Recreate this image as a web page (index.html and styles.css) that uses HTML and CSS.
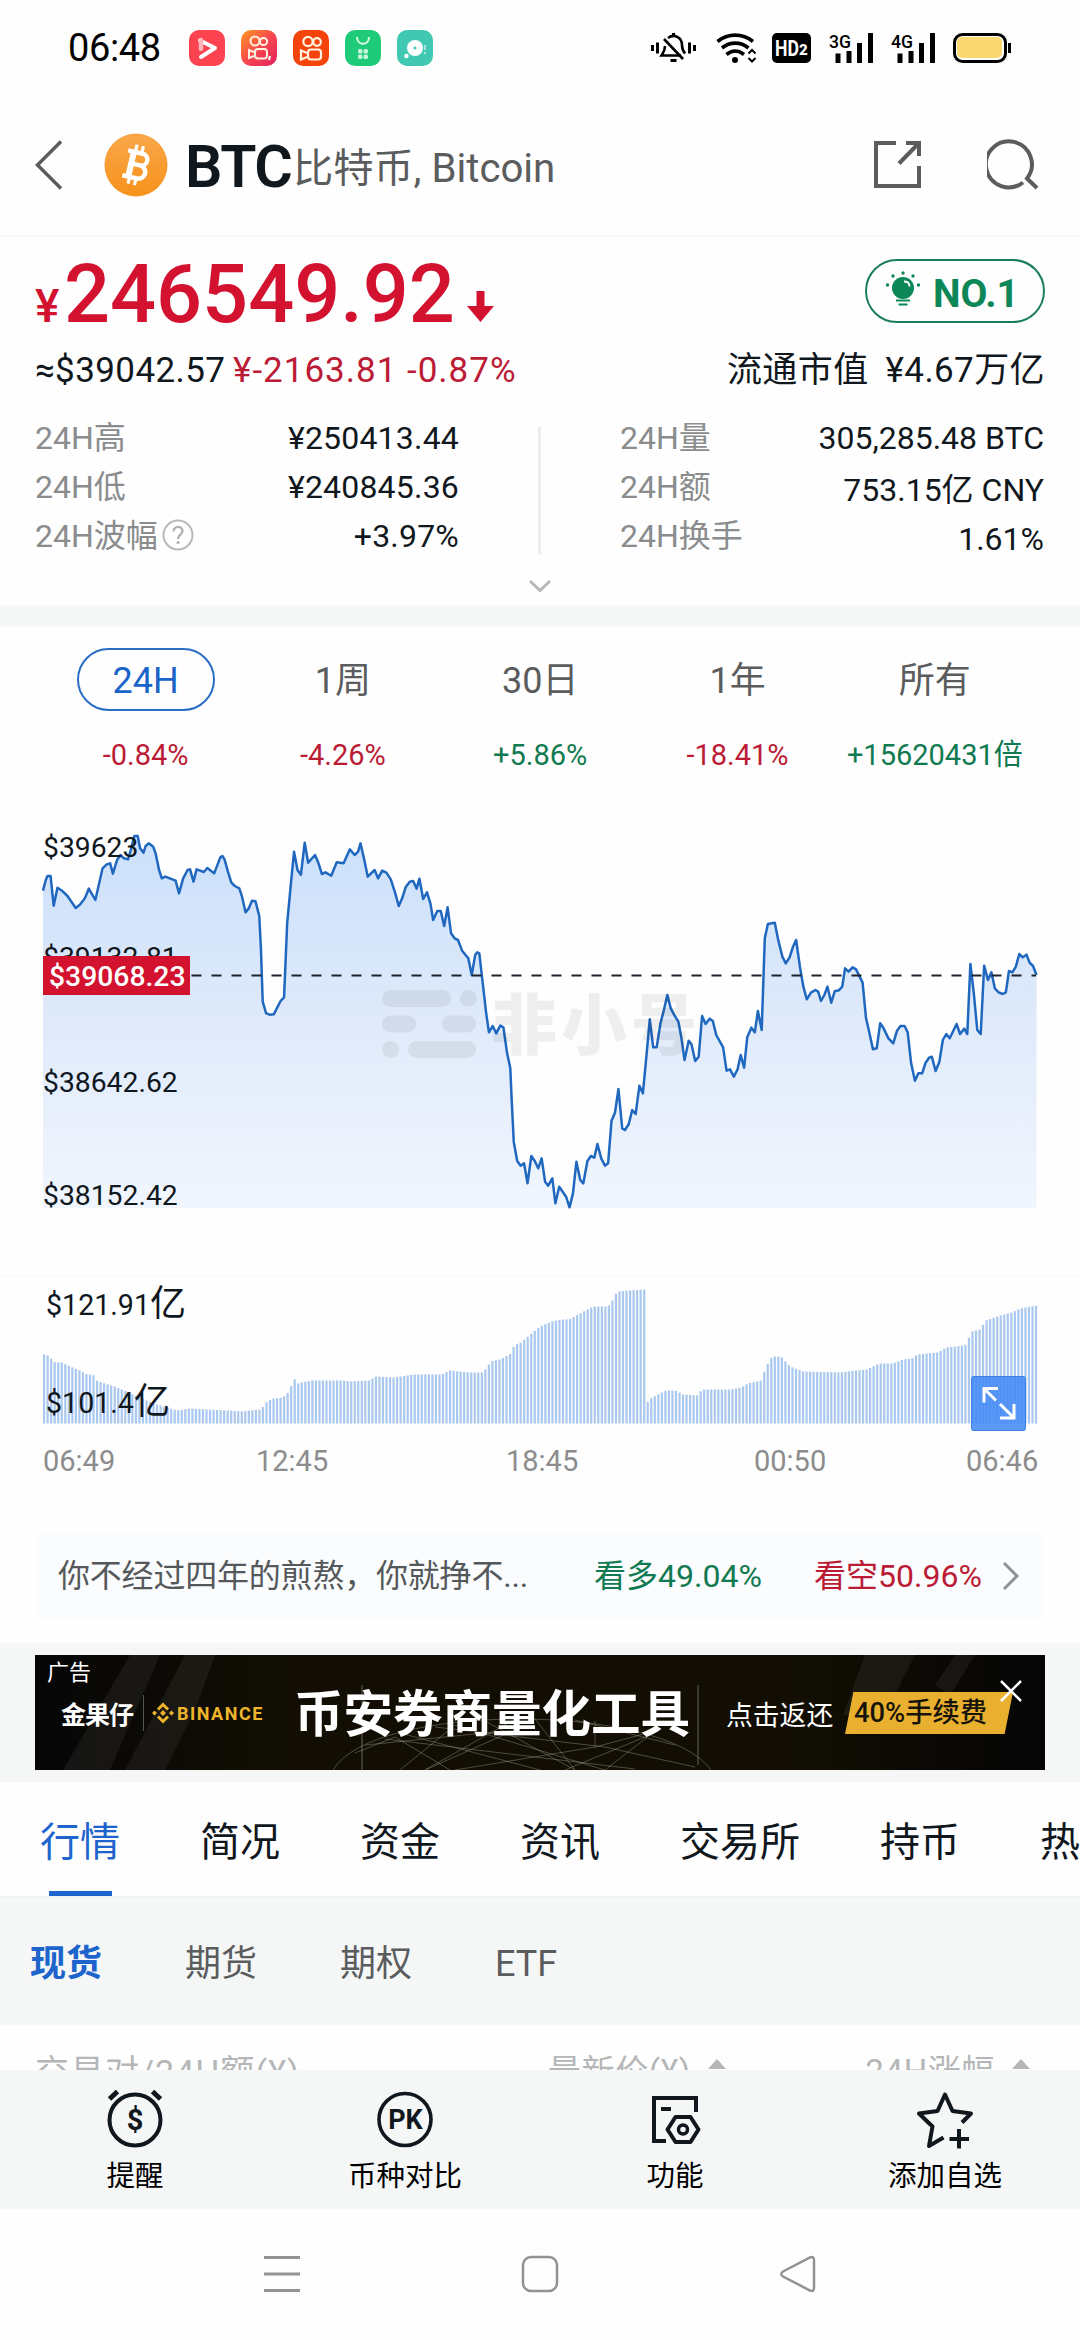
FILE: index.html
```html
<!DOCTYPE html>
<html lang="zh-CN">
<head>
    <meta charset="UTF-8">
    <meta name="viewport" content="width=device-width, initial-scale=1.0">
    <title>BTC 比特币</title>
    <link rel="stylesheet" href="styles.css">
</head>
<body>
    <!-- Status bar -->
    <div class="status-bar">
        <span class="clock">06:48</span>
        <div class="app-icons">
            <svg width="36" height="36" viewBox="0 0 36 36">
                <rect width="36" height="36" rx="10" fill="#fb4450"/>
                <path d="M11 10.500L26 18 12 27" fill="none" stroke="#fff" stroke-width="4" stroke-linejoin="round" stroke-linecap="round"/>
                <path d="M12 10v9" stroke="#fdb6ba" stroke-width="4.500" stroke-linecap="round"/>
            </svg>
            <svg width="36" height="36" viewBox="0 0 36 36">
                <defs>
                    <linearGradient id="ks" x1="0" y1="0" x2="1" y2="1">
                        <stop offset="0" stop-color="#ff9a1f"/>
                        <stop offset=".5" stop-color="#f8484f"/>
                        <stop offset="1" stop-color="#e01f60"/>
                    </linearGradient>
                </defs>
                <rect width="36" height="36" rx="10" fill="url(#ks)"/>
                <g fill="none" stroke="#fff3e0" stroke-width="2">
                    <circle cx="14" cy="11" r="4.500"/>
                    <circle cx="22.500" cy="11.500" r="3.600"/>
                    <rect x="14" y="19" width="12" height="9.500" rx="3"/>
                    <path d="M13 22L8 20v8l5-2"/>
                </g>
                <path d="M29 26l-1 4" stroke="#fff" stroke-width="2"/>
            </svg>
            <svg width="36" height="36" viewBox="0 0 36 36">
                <rect width="36" height="36" rx="10" fill="#f4440c"/>
                <g fill="none" stroke="#fff3e0" stroke-width="2.200">
                    <circle cx="15" cy="11.500" r="4.700"/>
                    <circle cx="24" cy="12" r="3.800"/>
                    <rect x="15" y="19.500" width="13" height="10" rx="3"/>
                    <path d="M14 23l-6-2.500v9l6-2.500"/>
                </g>
            </svg>
            <svg width="36" height="36" viewBox="0 0 36 36">
                <rect width="36" height="36" rx="10" fill="#1fcb78"/>
                <path d="M12 7c0 9 12 9 12 0" fill="none" stroke="#d8fbe8" stroke-width="2"/>
                <g fill="#c4f4db">
                    <rect x="13" y="19" width="4.500" height="4.500" rx="1.500"/>
                    <rect x="18.500" y="19" width="4.500" height="4.500" rx="1.500"/>
                    <rect x="13" y="24.500" width="4.500" height="4.500" rx="1.500"/>
                    <rect x="18.500" y="24.500" width="4.500" height="4.500" rx="1.500"/>
                </g>
            </svg>
            <svg width="36" height="36" viewBox="0 0 36 36">
                <rect width="36" height="36" rx="10" fill="#41c8b2"/>
                <circle cx="18" cy="18" r="8" fill="#fff"/>
                <circle cx="18" cy="18" r="1.500" fill="#41c8b2"/>
                <circle cx="9.500" cy="26" r="2.200" fill="#fff"/>
                <path d="M28 15v5M28 22v2" stroke="#c9f2eb" stroke-width="1.500"/>
            </svg>
        </div>
        <svg class="status-right" width="362" height="36" viewBox="650 30 362 36">
            <!-- muted bell -->
            <g fill="none" stroke="#000" stroke-width="3">
                <path d="M652.500 45v6M657.500 42.500v11M689.500 42.500v11M694.500 45v6"/>
                <path d="M665 46c0 5-2 7-3.500 9.500H681" stroke-width="2.600"/>
                <path d="M668 38c6-4.500 14-1 14 7 0 4 1 6 3 8.500" stroke-width="2.600"/>
                <path d="M664 39l19 20" stroke-width="2.600"/>
                <path d="M673.500 33v3" stroke-width="3"/>
                <path d="M670.500 60.500h6" stroke-width="3"/>
            </g>
            <!-- wifi -->
            <g fill="none" stroke="#000" stroke-width="3.600">
                <path d="M717.500 41.500c10.500-8.500 25-8.500 35.500 0"/>
                <path d="M722 48c8-6.500 18.500-6.500 26.500 0"/>
                <path d="M726.500 54.500c5.500-4.500 12-4.500 17.500 0"/>
            </g>
            <circle cx="735" cy="60" r="3" fill="#000"/>
            <path d="M748.500 53.500l3.500-3.500 3.500 3.500M748.500 58l3.500 3.500 3.500-3.500" fill="none" stroke="#000" stroke-width="2"/>
            <rect x="772" y="33" width="39" height="30" rx="5" fill="#000"/>
            <text class="hd" x="775" y="55.500" textLength="24" lengthAdjust="spacingAndGlyphs">HD</text>
            <text class="hd-sub" x="799" y="55">2</text>
            <text class="net" x="829" y="47.500" textLength="22" lengthAdjust="spacingAndGlyphs">3G</text>
            <path d="M838 53.500v9.500M849 51v12M859.500 43v20M870.500 33v30" stroke="#000" stroke-width="5"/>
            <text class="net" x="891" y="47.500" textLength="22" lengthAdjust="spacingAndGlyphs">4G</text>
            <path d="M900 53.500v9.500M911 51v12M921.500 43v20M932.500 33v30" stroke="#000" stroke-width="5"/>
            <rect x="954.500" y="34.500" width="51" height="27" rx="8" fill="#fff" stroke="#000" stroke-width="3"/>
            <rect x="957" y="37" width="45" height="21" rx="5" fill="#fbd971"/>
            <path d="M1009.500 43v10" stroke="#000" stroke-width="3"/>
        </svg>
    </div>

    <!-- Header -->
    <header class="header">
        <svg class="back" width="28" height="50" viewBox="0 0 28 50"><path d="M26 1.500L2.500 25 26 48.500" fill="none" stroke="#5a5c5d" stroke-width="3.500"/></svg>
        <svg class="coin" width="64" height="64" viewBox="0 0 64 64">
            <defs>
                <linearGradient id="coin" x1="0" y1="0" x2="0" y2="1">
                    <stop offset="0" stop-color="#f9a74a"/>
                    <stop offset="1" stop-color="#f7921b"/>
                </linearGradient>
            </defs>
            <circle cx="32" cy="32" r="31.500" fill="url(#coin)"/>
            <!-- coin symbol: tilted double bowl with four ticks -->
            <g transform="rotate(13 32 32)" fill="none" stroke="#fff">
                <path d="M27 18v28" stroke-width="6"/>
                <path d="M21 19.500h15a6 6 0 0 1 0 12H28M36 31.500a6.500 6.500 0 0 1 0 13.500H21" stroke-width="4.500"/>
                <path d="M28.500 12v7M35 12v7M28.500 45v7M35 45v7" stroke-width="3.200"/>
            </g>
        </svg>
        <h1 class="title">BTC</h1>
        <span class="subtitle">比特币, Bitcoin</span>
        <svg class="share" width="50" height="50" viewBox="0 0 50 50">
            <path d="M23 3H3v43h43V26" fill="none" stroke="#5a5c5d" stroke-width="4"/>
            <path d="M33 3h13v13M45 4L26 23.500" fill="none" stroke="#5a5c5d" stroke-width="4"/>
        </svg>
        <svg class="search" width="52" height="54" viewBox="0 0 52 54">
            <path d="M36 46.500A23 23 0 1 1 40 42.500L50 52" fill="none" stroke="#5a5c5d" stroke-width="4"/>
        </svg>
    </header>

    <!-- Price summary -->
    <section class="summary">
        <div class="price-row">
            <span class="currency">¥</span><span class="price">246549.92</span>
            <svg class="arrow" width="27" height="31" viewBox="0 0 27 31"><path d="M9.500 0h8v15H27L13.500 31 0 15h9.500z" fill="#d3122f"/></svg>
            <div class="rank">
                <svg width="36" height="36" viewBox="0 0 36 36">
                    <circle cx="18" cy="17" r="11" fill="#0d8757"/>
                    <path d="M12 24h12l-1.500 3h-9z" fill="#0d8757"/>
                    <path d="M19 10.500c3.500 0 5.500 2 5.500 5" fill="none" stroke="#fff" stroke-width="1.800"/>
                    <path d="M11 29.500h14M13.500 33.500h9" stroke="#0d8757" stroke-width="1.800"/>
                    <g fill="#0d8757">
                        <circle cx="2.500" cy="14" r="1.700"/><circle cx="8" cy="5" r="1.700"/><circle cx="18" cy="2" r="1.700"/><circle cx="28" cy="5" r="1.700"/><circle cx="33.500" cy="14" r="1.700"/>
                    </g>
                </svg>
                <span>NO.1</span>
            </div>
        </div>
        <div class="sub-row">
            <span class="usd">≈$39042.57</span>
            <span class="change">¥-2163.81 -0.87%</span>
            <span class="cap">流通市值</span>
            <span class="cap-value">¥4.67万亿</span>
        </div>
        <div class="stats">
            <dl class="stat-col left">
                <div><dt>24H高</dt><dd>¥250413.44</dd></div>
                <div><dt>24H低</dt><dd>¥240845.36</dd></div>
                <div>
                    <dt>24H波幅<svg class="help" width="32" height="32" viewBox="0 0 32 32"><circle cx="16" cy="16" r="14.500" fill="none" stroke="#b9b9b9" stroke-width="2"/><path d="M11.500 12.500c0-6 9-6 9-.5 0 3.500-4.500 4-4.500 8" fill="none" stroke="#b0b0b0" stroke-width="2.300"/><circle cx="16" cy="23.500" r="1.600" fill="#b0b0b0"/></svg></dt>
                    <dd>+3.97%</dd>
                </div>
            </dl>
            <div class="split"></div>
            <dl class="stat-col right">
                <div><dt>24H量</dt><dd>305,285.48 BTC</dd></div>
                <div><dt>24H额</dt><dd>753.15亿 CNY</dd></div>
                <div><dt>24H换手</dt><dd>1.61%</dd></div>
            </dl>
        </div>
        <svg class="more" width="24" height="14" viewBox="0 0 24 14"><path d="M2 2l10 9.500L22 2" fill="none" stroke="#b5b7b8" stroke-width="3"/></svg>
    </section>

    <!-- Period tabs -->
    <section class="periods">
        <div class="period"><span class="name active">24H</span><span class="down">-0.84%</span></div>
        <div class="period"><span class="name">1周</span><span class="down">-4.26%</span></div>
        <div class="period"><span class="name">30日</span><span class="up">+5.86%</span></div>
        <div class="period"><span class="name">1年</span><span class="down">-18.41%</span></div>
        <div class="period"><span class="name">所有</span><span class="up">+15620431倍</span></div>
    </section>

    <!-- Price and volume chart -->
    <svg class="chart" width="1080" height="650" viewBox="0 790 1080 650">
        <defs>
            <linearGradient id="area" gradientUnits="userSpaceOnUse" x1="0" y1="105" x2="0" y2="1224">
                <stop offset="0" stop-color="#cbe0fb"/>
                <stop offset=".5" stop-color="#dfeafa"/>
                <stop offset="1" stop-color="#f1f6fe"/>
            </linearGradient>
        </defs>
        <svg class="plot" x="43" y="835" width="993.500" height="373" viewBox="125 105 2885 1119" preserveAspectRatio="none">
            <polygon id="priceArea" fill="url(#area)"/>
            <polyline id="priceLine"/>
        </svg>
        <g class="watermark">
            <rect x="382" y="990" width="69" height="17" rx="8.500"/>
            <rect x="460" y="990" width="17" height="17" rx="8.500"/>
            <rect x="382" y="1015.500" width="34" height="17" rx="8.500"/>
            <rect x="442" y="1015.500" width="34" height="17" rx="8.500"/>
            <rect x="382" y="1041" width="17" height="17" rx="8.500"/>
            <rect x="408" y="1041" width="68" height="17" rx="8.500"/>
            <text x="491" y="1049" textLength="206">非小号</text>
        </g>
        <path class="dash" d="M191.500 975.500H1036"/>
        <g class="axis">
            <text x="43" y="857">$39623</text>
            <text x="43" y="967">$39132.81</text>
            <text x="43" y="1092">$38642.62</text>
            <text x="43" y="1205">$38152.42</text>
        </g>
        <rect x="43" y="956" width="147" height="39" fill="#d3122f"/>
        <text class="tag" x="49" y="986">$39068.23</text>
        <path d="M0 1275.500H1080" stroke="#f9f9f9"/>
        <g id="volume"></g>
        <g class="axis vol">
            <text x="46" y="1315">$121.91<tspan class="unit" dy="1">亿</tspan></text>
            <text x="46" y="1413">$101.4<tspan class="unit" dy="1">亿</tspan></text>
        </g>
        <rect x="971.500" y="1376.500" width="54" height="54" rx="2" fill="#3f87f5" fill-opacity=".85" stroke="#3b80e8"/>
        <path d="M998 1388.500h-14v14M985 1389.500l11 11M1000 1418h14v-14M1013 1417l-13-13" fill="none" stroke="#fff" stroke-width="3"/>
    </svg>
    <div class="times">
        <span>06:49</span><span>12:45</span><span>18:45</span><span>00:50</span><span>06:46</span>
    </div>

    <!-- Sentiment -->
    <div class="sentiment">
        <span class="quote">你不经过四年的煎熬，你就挣不...</span>
        <span class="up bull">看多49.04%</span>
        <span class="down bear">看空50.96%</span>
        <svg width="18" height="30" viewBox="0 0 18 30"><path d="M2 2l13 13L2 28" fill="none" stroke="#8e9092" stroke-width="3"/></svg>
    </div>

    <!-- Ad -->
    <div class="ad-wrap">
        <div class="ad">
            <svg class="ad-bg" width="1010" height="115" viewBox="0 0 1010 115">
                <path d="M75 115L125 0h-30L28 115zM130 115l30-60 20-55h-30l-60 115zM808 60L830 0h50l-30 60zM900 30L920 0h20l-25 40z" fill="#fff" opacity=".06"/>
                <path d="M327 30v85M663 30v80" stroke="#fff" opacity=".35"/>
                <g fill="none" stroke="#aaa79c" stroke-width="1">
                    <path d="M298 115c40-68 330-68 378 0M320 98l40-16 55 33M330 90l150-15-90 40M365 78l140 37M420 70l-55 45M420 70l150 45M480 64l-90 51M500 64l40 51M560 92l60-16-50 39M400 72l170 20 90 20M560 66v26l-140 23M610 82l-80 33M640 90l-100-25M350 84l250 30M450 66l90 49" opacity=".4"/>
                </g>
            </svg>
            <span class="ad-label">广告</span>
            <div class="ad-line">
                <span class="ad-brand">金果仔</span>
                <svg class="ad-logo" width="22" height="22" viewBox="0 0 22 22">
                    <g fill="none" stroke="#eeb52c" stroke-width="3">
                        <path d="M6 7.500l5-5 5 5M6 14.500l5 5 5-5"/>
                    </g>
                    <path d="M11 8l3 3-3 3-3-3zM2.500 8.500L5 11l-2.500 2.500L0 11zM19.500 8.500L22 11l-2.500 2.500L17 11z" fill="#eeb52c"/>
                </svg>
                <span class="ad-binance">BINANCE</span>
                <span class="ad-title">币安券商量化工具</span>
                <span class="ad-text">点击返还</span>
                <span class="ad-off">40%手续费</span>
            </div>
            <svg class="ad-close" width="22" height="22" viewBox="0 0 22 22"><path d="M1 1l20 20M21 1L1 21" stroke="#fff" stroke-width="2.500"/></svg>
        </div>
    </div>

    <!-- Tabs -->
    <nav class="tabs">
        <a class="active">行情</a><a>简况</a><a>资金</a><a>资讯</a><a>交易所</a><a>持币</a><a>热</a>
    </nav>
    <nav class="subtabs">
        <a class="active">现货</a><a>期货</a><a>期权</a><a>ETF</a>
    </nav>
    <div class="table-head">
        <span class="pair">交易对/24H额(¥)</span>
        <span class="last">最新价(¥)</span><i class="sort"></i>
        <span class="rise">24H涨幅</span><i class="sort"></i>
    </div>

    <!-- Bottom actions -->
    <div class="actions">
        <div class="action">
            <svg width="60" height="60" viewBox="0 0 60 60">
                <circle cx="30" cy="31" r="25.500" fill="none" stroke="#10171d" stroke-width="4"/>
                <path d="M4.500 10l8-7.500M55.500 10l-8-7.500" stroke="#10171d" stroke-width="5"/>
                <text x="30" y="40.500" class="glyph dollar">$</text>
            </svg>
            <span>提醒</span>
        </div>
        <div class="action">
            <svg width="60" height="60" viewBox="0 0 60 60">
                <circle cx="30" cy="30.500" r="26" fill="none" stroke="#10171d" stroke-width="3.600"/>
                <text x="30.500" y="39.500" class="glyph">PK</text>
            </svg>
            <span>币种对比</span>
        </div>
        <div class="action">
            <svg width="60" height="60" viewBox="0 0 60 60" fill="none" stroke="#10171d" stroke-width="4">
                <path d="M21 52H9V9h42v14M16 20h10"/>
                <path d="M30.500 28h15l8 12.500-8 12.500h-15l-8-12.500z" stroke-linejoin="round"/>
                <circle cx="38" cy="40.500" r="4.500" stroke-width="3.500"/>
            </svg>
            <span>功能</span>
        </div>
        <div class="action">
            <svg width="60" height="60" viewBox="0 0 60 60" fill="none" stroke="#10171d" stroke-width="4" stroke-linejoin="round">
                <path d="M28.500 48.500L14 57l3.500-19.500L4 24.500l18.500-2.500L30 5.500 37.500 22 56 24.500 47 33.500"/>
                <path d="M34.500 50H54M44 40v19.500"/>
            </svg>
            <span>添加自选</span>
        </div>
    </div>

    <!-- System navigation -->
    <div class="sys-nav">
        <svg width="36" height="36" viewBox="0 0 36 36"><path d="M0 1.500h36M0 18h36M0 34.500h36" stroke="#929292" stroke-width="3"/></svg>
        <svg width="38" height="38" viewBox="0 0 38 38"><rect x="2" y="2" width="34" height="34" rx="8" fill="none" stroke="#929292" stroke-width="2.500"/></svg>
        <svg width="36" height="38" viewBox="0 0 36 38"><path d="M3 16.500L30 2.500q4-1.500 4 2.500v28q0 4-4 2.500L3 21.500q-3.500-2.500 0-5z" fill="none" stroke="#929292" stroke-width="2.500"/></svg>
    </div>

    <script>
        const pricePoints = `125,272 133,240 138,228 147,228 156,317 167,263 180,272 196,288 212,312 220,324 232,314 247,294
            258,266 277,300 298,205 310,193 320,190 328,221 340,180 350,165 360,175 372,178 380,150 390,108 400,108 407,145
            417,158 423,138 432,130 445,140 452,160 462,210 470,235 480,230 495,236 510,242 520,280 532,235 545,210 552,208
            562,245 571,208 592,216 602,204 622,220 640,172 646,168 652,178 662,215 672,248 682,258 695,265 703,290 713,337
            722,326 732,302 742,304 753,348 758,450 763,605 773,640 783,644 795,643 815,603 825,592 834,370 845,250 854,155 864,210
            874,224 885,128 895,188 915,165 925,190 935,222 945,217 962,227 978,187 998,190 1016,148 1030,165 1040,155
            1047,130 1058,180 1068,230 1088,210 1098,235 1110,212 1122,218 1135,238 1148,280 1158,318 1168,295 1178,262
            1190,245 1200,243 1210,266 1218,236 1229,297 1240,277 1250,310 1258,360 1270,333 1280,333 1290,378 1300,322
            1310,400 1320,415 1330,420 1342,452 1360,475 1370,525 1380,465 1386,457 1392,460 1402,550 1412,640 1420,697
            1431,678 1441,700 1453,677 1462,682 1472,755 1482,805 1486,900 1492,1025 1502,1083 1512,1097 1522,1090
            1532,1150 1543,1068 1553,1083 1563,1105 1573,1075 1583,1145 1592,1157 1604,1135 1613,1210 1624,1160 1634,1175
            1644,1190 1654,1222 1664,1180 1674,1085 1685,1140 1694,1150 1706,1083 1716,1068 1726,1073 1735,1032 1746,1075
            1757,1097 1766,1090 1776,962 1786,938 1796,867 1807,985 1815,990 1826,972 1836,930 1846,942 1857,857 1867,880
            1878,760 1887,658 1897,742 1907,742 1918,670 1928,630 1938,585 1948,625 1958,645 1970,665 1979,715 1988,780
            2000,722 2008,733 2019,783 2029,770 2039,648 2049,672 2061,656 2070,663 2080,705 2100,742 2110,812 2120,808
            2131,830 2142,808 2151,765 2161,803 2170,712 2182,683 2192,697 2201,633 2212,690 2221,415 2230,372 2250,368
            2260,420 2272,470 2282,490 2293,472 2303,440 2312,420 2323,500 2333,560 2343,598 2355,578 2368,570 2376,575
            2384,603 2394,585 2403,560 2414,608 2424,574 2436,571 2446,560 2454,505 2464,515 2476,502 2486,508 2505,548
            2515,655 2525,700 2535,748 2546,745 2556,670 2566,685 2580,715 2594,730 2605,692 2615,678 2627,678 2636,697
            2646,790 2657,842 2667,820 2678,820 2688,788 2698,773 2706,770 2717,813 2728,785 2738,720 2748,702 2758,715
            2778,672 2788,702 2800,686 2809,702 2818,492 2828,580 2838,690 2848,702 2858,497 2869,540 2879,517 2889,565
            2900,577 2912,582 2921,577 2930,513 2940,517 2950,500 2960,462 2970,472 2981,464 2990,488 3000,498 3010,525`;

        document.getElementById('priceLine').setAttribute('points', pricePoints);
        document.getElementById('priceArea').setAttribute('points', '125,1224 ' + pricePoints + ' 3010,1224');

        // [x in px, bar height in px]
        const volume = [
            [43, 69], [47, 68], [54, 61], [61, 61], [69, 57], [79, 53], [86, 49], [92, 49], [95, 43], [107, 39], [114, 37],
            [123, 33], [134, 28], [148, 22], [162, 17], [176, 13], [189, 15], [207, 14], [227, 13], [241, 12], [249, 13],
            [260, 14], [266, 22], [272, 25], [282, 26], [288, 32], [293, 45], [297, 40], [310, 43], [341, 43], [351, 42],
            [368, 43], [375, 47], [393, 46], [413, 49], [441, 49], [448, 53], [468, 51], [482, 51], [490, 62], [499, 64],
            [510, 70], [513, 78], [520, 81], [527, 87], [534, 93], [541, 98], [551, 102], [561, 104], [568, 104],
            [579, 110], [592, 117], [607, 117], [612, 124], [616, 132], [642, 134], [644, 19], [651, 26], [665, 33],
            [674, 33], [682, 29], [696, 28], [701, 34], [730, 34], [740, 36], [747, 40], [760, 43], [765, 57], [771, 67],
            [780, 67], [789, 57], [802, 52], [840, 51], [854, 53], [866, 54], [878, 60], [892, 60], [902, 64], [911, 65],
            [916, 69], [937, 71], [945, 76], [964, 78], [971, 92], [979, 94], [985, 103], [999, 108], [1011, 111],
            [1019, 115], [1036, 118]
        ];

        const volumeGroup = document.getElementById('volume');
        let seg = 0;
        for (let x = 43; x < 1036; x += 3.53) {
            while (seg < volume.length - 2 && x >= volume[seg + 1][0]) seg++;
            const [x0, h0] = volume[seg];
            const [x1, h1] = volume[seg + 1];
            const h = x0 === 642 ? h0 : h0 + (h1 - h0) * (x - x0) / (x1 - x0);
            const bar = document.createElementNS('http://www.w3.org/2000/svg', 'rect');
            bar.setAttribute('x', x.toFixed(2));
            bar.setAttribute('y', (1423.5 - h).toFixed(1));
            bar.setAttribute('width', 2.2);
            bar.setAttribute('height', h.toFixed(1));
            volumeGroup.appendChild(bar);
        }
    </script>
</body>
</html>
```
FILE: styles.css
```css
* {
    box-sizing: border-box;
}

body {
    margin: 0;
    width: 1080px;
    height: 2340px;
    overflow: hidden;
    background: #fefefe;
    color: #10171d;
    font-family: Roboto, "Noto Sans CJK SC", sans-serif;
}

svg {
    display: block;
    flex: none;
}

.up {
    color: #117a50;
}

.down {
    color: #bb1b35;
}

/* status bar */
.status-bar {
    display: flex;
    align-items: center;
    height: 96px;
    padding: 0 68px;
}

.clock {
    width: 121px;
    font-size: 38px;
    letter-spacing: -0.4px;
    color: #000;
}

.app-icons {
    display: flex;
    gap: 16px;
}

.status-right {
    margin-left: auto;
}

.hd {
    font-size: 22px;
    font-weight: 700;
    fill: #fff;
}

.hd-sub {
    font-size: 15px;
    font-weight: 900;
    fill: #fff;
}

.net {
    font-size: 19px;
    font-weight: 500;
}

/* header */
.header {
    display: flex;
    align-items: center;
    height: 141px;
    padding: 0 41px 2px 35px;
    border-bottom: 2px solid #f7f7f7;
}

.coin {
    margin: 0 17px 0 41px;
}

.title {
    width: 108px;
    margin: 4px 0 0;
    font-size: 59px;
    font-weight: 600;
    letter-spacing: -1.5px;
}

.subtitle {
    font-size: 40.2px;
    color: #5a5c5d;
    white-space: nowrap;
}

.share {
    margin-left: auto;
    margin-right: 64px;
}

.search {
    margin-bottom: 3px;
}

/* summary */
.summary {
    height: 368px;
    padding: 18px 35px 0;
}

.price-row {
    display: flex;
    align-items: baseline;
    height: 80px;
    line-height: 80px;
    color: #d3122f;
    font-weight: 500;
}

.currency {
    width: 29px;
    font-size: 46px;
}

.price {
    font-size: 81px;
}

.arrow {
    margin-left: 12px;
}

.rank {
    display: flex;
    align-self: flex-start;
    align-items: center;
    gap: 12px;
    width: 180px;
    height: 64px;
    margin: 4px 0 0 auto;
    padding-left: 18px;
    border: 2px solid #1a7f57;
    border-radius: 32px;
    color: #0d8757;
    font-size: 39px;
    font-weight: 700;
    line-height: 60px;
}

.rank span {
    padding-top: 5px;
}

.rank svg {
    margin-bottom: 4px;
}

.sub-row {
    display: flex;
    height: 48px;
    margin-top: 12px;
    font-size: 35px;
    line-height: 48px;
    letter-spacing: 0.4px;
}

.usd {
    width: 198px;
}

.change {
    color: #bb1b35;
    letter-spacing: 1px;
}

.cap {
    margin-left: auto;
    margin-right: 17px;
}

.stats {
    display: flex;
    align-items: flex-start;
    height: 147px;
    margin-top: 19px;
    font-size: 32px;
    line-height: 49px;
}

.stat-col {
    width: 424px;
    margin: 0;
}

.stat-col > div {
    display: flex;
    justify-content: space-between;
    height: 49px;
}

.stat-col dt {
    display: flex;
    align-items: center;
    color: #8a8c8d;
}

.stat-col dd {
    margin: 0;
}

.stat-col.left dd {
    letter-spacing: 0.2px;
}

.stat-col.right div:nth-child(n + 2) dd {
    padding-top: 3px;
}

.help {
    margin: -3px 0 0 4px;
}

.split {
    width: 3px;
    height: 127px;
    margin: 13px 79px 0 79px;
    background: #ececec;
}

.more {
    margin: 18px auto 0;
}

/* periods */
.periods {
    display: grid;
    grid-template-columns: repeat(5, 197.3px);
    height: 185px;
    padding: 43px 0 0 47px;
    border-top: 22px solid #f5f7f7;
}

.period {
    display: flex;
    flex-direction: column;
    align-items: center;
    font-size: 29px;
    line-height: 40px;
    white-space: nowrap;
}

.period .name {
    height: 63px;
    margin: -22px 0 24px;
    padding: 0 34px;
    border: 2px solid transparent;
    border-radius: 32px;
    color: #5a5c5d;
    font-size: 36px;
    line-height: 62px;
}

.period .name.active {
    border-color: #2a6dc4;
    color: #1a63c8;
}

/* chart */
#priceLine {
    fill: none;
    stroke: #2068bf;
    stroke-width: 2.5;
    stroke-linejoin: round;
    vector-effect: non-scaling-stroke;
}

.plot {
    overflow: visible;
}

.watermark {
    fill: #000;
    opacity: 0.06;
}

.watermark text {
    font-size: 66px;
    font-weight: 900;
}

.dash {
    stroke: #1c232b;
    stroke-width: 1.8;
    stroke-dasharray: 10 10;
}

.axis,
.tag {
    font-size: 28.3px;
    fill: #10171d;
}

.tag {
    font-weight: 500;
    fill: #fff;
}

.axis.vol {
    font-size: 28.6px;
}

.unit {
    font-size: 36px;
}

#volume {
    fill: #a9c8ef;
}

.times {
    display: grid;
    grid-template-columns: 213px 250px 248px 212px auto;
    height: 93px;
    padding-left: 43px;
    font-size: 29px;
    line-height: 42px;
    color: #8c8c8c;
}

/* sentiment */
.sentiment {
    display: flex;
    align-items: center;
    height: 87px;
    margin: 0 35px 23px;
    padding-left: 23px;
    border-radius: 8px;
    background: #fafcfe;
    font-size: 32px;
    line-height: 40px;
    white-space: nowrap;
}

.sentiment svg {
    margin-bottom: 1px;
}

.sentiment span {
    padding-bottom: 2px;
}

.quote {
    width: 536px;
    color: #55585a;
    letter-spacing: -0.2px;
}

.bull {
    width: 220px;
}

.bear {
    width: 188px;
}

/* ad */
.ad-wrap {
    height: 139px;
    padding: 12px 35px;
    background: #f5f7f7;
}

.ad {
    position: relative;
    height: 115px;
    padding: 6px 12px;
    overflow: hidden;
    background: linear-gradient(90deg, #060607, #120e03 25%, #120e03 75%, #050506);
    color: #fff;
}

.ad-bg {
    position: absolute;
    top: 0;
    left: 0;
}

.ad-label {
    display: block;
    font-size: 22px;
    line-height: 24px;
}

.ad-line {
    position: relative;
    display: flex;
    align-items: center;
    height: 56px;
    padding-left: 14px;
    white-space: nowrap;
}

.ad-brand {
    width: 83px;
    border-right: 1px solid #555;
    font-size: 25px;
    font-weight: 700;
    letter-spacing: -1px;
}

.ad-logo {
    margin: 0 3px 0 8px;
}

.ad-binance {
    width: 117px;
    color: #eeb52c;
    font-size: 18px;
    font-weight: 700;
    letter-spacing: 1.5px;
}

.ad-title {
    width: 432px;
    padding-top: 4px;
    font-size: 49.5px;
    font-weight: 700;
    line-height: 60px;
}

.ad-text {
    width: 119px;
    font-size: 26.8px;
}

.ad-off {
    width: 168px;
    height: 42px;
    padding-left: 9px;
    background: #e9b02f;
    clip-path: polygon(5% 0, 100% 0, 95% 100%, 0 100%);
    color: #17130a;
    font-size: 27.3px;
    font-weight: 500;
    line-height: 42px;
}

.ad-close {
    position: absolute;
    top: 25px;
    right: 23px;
}

/* tabs */
.tabs {
    display: flex;
    gap: 80px;
    height: 115px;
    padding-left: 40px;
    overflow: hidden;
    border-bottom: 1px solid #f0f1f1;
    font-size: 40px;
    line-height: 121px;
    white-space: nowrap;
}

.tabs a {
    height: 114px;
}

.tabs .active {
    background: linear-gradient(#1d65cc, #1d65cc) center bottom / 63px 5px no-repeat;
    color: #1d65cc;
}

.subtabs {
    display: flex;
    gap: 83px;
    height: 128px;
    padding-left: 30px;
    background: #f5f7f7;
    color: #5a5c5d;
    font-size: 36px;
    line-height: 135px;
}

.subtabs .active {
    color: #1d65cc;
    font-weight: 700;
}

.table-head {
    display: flex;
    height: 45px;
    padding: 27px 35px 0;
    overflow: hidden;
    color: #b4b6b7;
    font-size: 33px;
    line-height: 40px;
    letter-spacing: 0.6px;
    white-space: nowrap;
}

.pair {
    width: 513px;
    font-size: 34px;
    letter-spacing: 1px;
}

.sort {
    margin: 7px 0 0 17px;
    height: 0;
    border: 9px solid transparent;
    border-top: 0;
    border-bottom: 10px solid #b4b6b7;
}

.rise {
    margin-left: auto;
}

.table-head .sort:last-child {
    margin-right: 15px;
}

/* bottom actions */
.actions {
    display: grid;
    grid-template-columns: repeat(4, 1fr);
    height: 139px;
    padding-top: 19px;
    background: #f5f7f7;
}

.action {
    display: flex;
    flex-direction: column;
    align-items: center;
    font-size: 28.5px;
    line-height: 40px;
    color: #000;
}

.action svg {
    margin-bottom: 8px;
}

.glyph {
    font-size: 27px;
    font-weight: 700;
    text-anchor: middle;
    fill: #10171d;
    stroke: none;
}

.dollar {
    font-size: 29px;
}

.sys-nav {
    display: flex;
    justify-content: space-between;
    align-items: center;
    height: 131px;
    padding: 0 264px 1px;
}
```
